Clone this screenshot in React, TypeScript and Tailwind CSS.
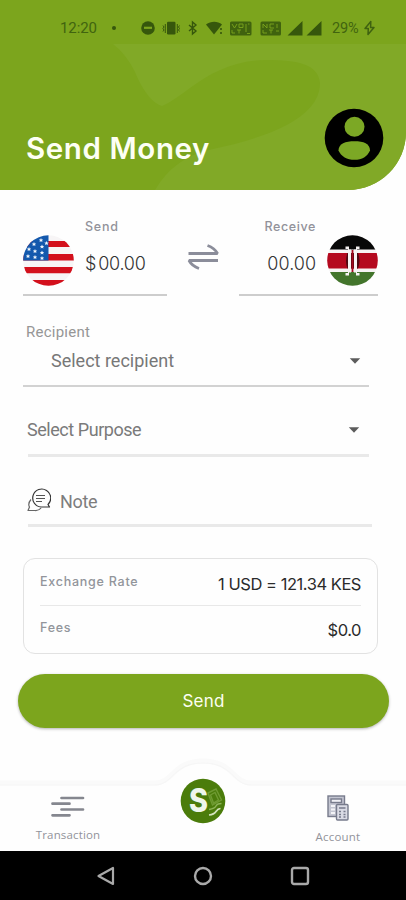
import React from 'react';

type IconProps = {
  className?: string;
};

const StatusIcons = () => (
  <svg width="238" height="20" viewBox="0 0 238 20" fill="#36570c" className="block">
    {/* Do not disturb */}
    <circle cx="10" cy="10" r="6.8" />
    <rect x="6" y="8.7" width="8" height="2.2" fill="#7ca51d" />
    {/* Vibrate */}
    <rect x="29" y="3.8" width="8.5" height="12.6" rx="1.2" />
    <path d="M27.3 6v9M39.3 6v9M25 7.500l1 1.500-1 1.500 1 1.500-1 1.500M41.500 7.500l-1 1.500 1 1.500-1 1.500 1 1.500" stroke="#36570c" strokeWidth="1" fill="none" />
    {/* Bluetooth */}
    <path d="M51 7l7 6-3.500 3V4L58 7l-7 6" stroke="#36570c" strokeWidth="1.400" fill="none" />
    {/* Wifi */}
    <path d="M68 6.500c5-3.700 11.500-3.700 16 0L76 16.500z" />
    <path d="M83 10v2M83 14v2" stroke="#36570c" strokeWidth="1.600" />
    {/* VoLTE */}
    <rect x="92" y="3.500" width="21.500" height="14" rx="1.500" opacity=".85" />
    <path d="M94 6l2.500 4 2.500-4M101 9.500h4V6h-4zM108 6v8M94 12v3h3M99 12h4M101 12v3.500M109 15.500h3M110 6h1.500" stroke="#7ca51d" strokeWidth=".9" fill="none" />
    <rect x="122.500" y="3.500" width="20.500" height="14" rx="1.500" opacity=".85" />
    <path d="M125 10V6l4 4V6M136 6h-4v4h4M125 12v3h4M131 12h4M133 12v3.500M139 6v4M138 13h3" stroke="#7ca51d" strokeWidth=".9" fill="none" />
    {/* Signal */}
    <path d="M149.500 17.500L164.500 3v14.500zM168.500 17.500L183.500 3v14.500z" />
  </svg>
);

const BatteryBolt = () => (
  <svg width="13" height="16" viewBox="0 0 13 16" fill="none" stroke="#3f6210" strokeWidth="1.500" strokeLinejoin="round">
    <path d="M7.800 1.500L2 8.500h3.300L5 14.500l6-7H7.600z" />
  </svg>
);

const UserIcon = () => (
  <svg width="60" height="60" viewBox="0 0 60 60">
    <circle cx="30" cy="30" r="29.300" fill="#000" />
    <circle cx="30.500" cy="18.800" r="10" fill="#7ca825" />
    <path d="M14.500 42.500c0-7 7-9.300 16-9.300s15.500 2.300 15.500 9.300c-2.500 6-8 9.300-15.500 9.300S17 48.500 14.500 42.500z" fill="#7ca825" />
  </svg>
);

const UsaFlag = () => (
  <svg width="51" height="51" viewBox="0 0 51 51" className="shrink-0">
    <clipPath id="usa">
      <circle cx="25.500" cy="25.500" r="25.300" />
    </clipPath>
    <g clipPath="url(#usa)">
      <rect width="51" height="51" fill="#f7f5f6" />
      <path d="M0 6h51v6H0zM0 19h51v6.500H0zM0 32h51v6.300H0zM0 45h51v6H0z" fill="#d3101c" />
      <rect width="25.500" height="25.500" fill="#1459ad" />
      <g fill="#eef4fb">
        {[
          [18, 5], [11, 9], [19, 11.500], [6, 14], [12, 16], [19, 17.500],
          [5, 21], [12, 22], [19, 23], [23.500, 8],
        ].map(([x, y]) => (
          <path key={`${x}-${y}`} d="M0-2.100L.7-.6 2.200-.5 1.100.6 1.400 2 0 1.200-1.400 2-1.100.6-2.200-.5-.7-.6z" transform={`translate(${x} ${y})`} />
        ))}
      </g>
    </g>
  </svg>
);

const KenyaFlag = () => (
  <svg width="51" height="51" viewBox="0 0 51 51" className="shrink-0">
    <clipPath id="kenya">
      <circle cx="25.500" cy="25.500" r="25.300" />
    </clipPath>
    <g clipPath="url(#kenya)">
      <rect width="51" height="51" fill="#f7f3f4" />
      <rect width="51" height="14.500" fill="#080808" />
      <rect y="18" width="51" height="15.500" fill="#b5091f" />
      <rect y="37" width="51" height="14" fill="#43752c" />
      {/* Shield */}
      <path d="M20.500 18h10.500q3 7.500 0 15.500H20.500q-3-8 0-15.500z" fill="#4f0812" />
      <path d="M18.500 11.500h3.500v3h2v23h-2v3h-3.500v-2.500h2.500V14h-2.500zM32.500 11.500H29v3h-2v23h2v3h3.500v-2.500H30V14h2.500z" fill="#f7f3f4" />
      <path d="M25.500 15v22" stroke="#a50a20" strokeWidth="1.800" />
    </g>
  </svg>
);

const SwapIcon = () => (
  <svg width="32" height="32" viewBox="0 0 32 32" fill="none" stroke="#8b8d9a" strokeWidth="2.800">
    <path d="M1.500 12.500h29q-3-5.500-10-8M31 19.500H2q3 5.500 10 8" strokeLinejoin="bevel" />
  </svg>
);

const Caret = ({ className = '' }: IconProps) => (
  <svg width="12" height="6" viewBox="0 0 12 6" className={className}>
    <path d="M.800.300h10.400L6 5.800z" fill="#5c5c5c" />
  </svg>
);

const NoteIcon = () => (
  <svg width="24" height="24" viewBox="0 0 24 24" fill="none" stroke="#343434" strokeWidth="1.200" strokeLinejoin="round">
    <path d="M21 16.500A9 9 0 1 0 14 19h8.500z" />
    <path d="M9 7.500h9M9 10.500h9M9 13.500h6" stroke="#555" />
    <path d="M4 11.500q-3.500 4-1.500 7.500l-1.500 3.500h7q4 .300 6-2.500" stroke="#666" />
  </svg>
);

const TransactionIcon = () => (
  <svg width="36" height="24" viewBox="0 0 36 24" stroke="#85878f" strokeWidth="2.700" strokeLinecap="round">
    <path d="M11.500 3h21.500M2.500 8.700h17M11.500 14.500h21.500M2.500 20.300h17" />
  </svg>
);

const AccountIcon = () => (
  <svg width="22" height="26" viewBox="0 0 22 26" fill="none" stroke="#777b8c" strokeWidth="1.400">
    <rect x="1" y="1" width="16.500" height="20.500" fill="#c3c5d1" />
    <rect x="4" y="4" width="10.500" height="3.500" fill="#f0f0f5" />
    <path d="M4 11h4M4 14.500h4M4 18h4" stroke="#f3f3f7" strokeWidth="2" />
    <rect x="9.500" y="9.500" width="11.500" height="15.500" rx="1" fill="#dadbe5" />
    <path d="M12 13h6.500M12 16.500h2M16.500 16.500h2M12 19.500h2M16.500 19.500h2M12 22h2M16.500 22h2" strokeWidth="1.300" />
  </svg>
);

const BrandLogo = () => (
  <svg width="46" height="46" viewBox="0 0 46 46" className="block">
    <circle cx="23" cy="23" r="22.300" fill="#4b7c0b" />
    <g fill="none" stroke="#6f9b32" strokeWidth="1.400">
      <path d="M28 15l8-4 5.500 11-9 5zM30.500 17l4.500-2.500 3.500 7.500-5 3z" />
      <path d="M29 31.500q6-1 7-3.500t5.500-2.500" stroke="#8db457" />
      <path d="M29 37q5-.500 7-3.500t4.500-3" stroke="#d3e3bd" strokeWidth="1.700" />
    </g>
    <text x="9" y="33.500" fill="#eef6ec" fontFamily="Inter, sans-serif" fontWeight="800" fontSize="32" textLength="19" lengthAdjust="spacingAndGlyphs">S</text>
  </svg>
);

const Header = () => (
  <header className="relative h-[190px] shrink-0 overflow-hidden rounded-br-[58px] bg-[#7ca51d]">
    <svg className="absolute inset-0" width="406" height="190" viewBox="0 0 406 190">
      <path d="M113 44H406V190H155Q174 157 213 149C265 138 320 119 320 83C318 64 298 60 266 60C235 60 210 73 190 88Q170 103 162 106C151 103 141 87 135 72Q126 54 113 44z" fill="#81a927" />
    </svg>
    <div className="relative flex h-11 items-center pt-3 pl-[60px] font-[Roboto] text-[15px] text-[#41640f]">
      <span className="w-[37px] tracking-[-0.1px]">12:20</span>
      <span className="ml-[15px] h-1 w-1 rounded-full bg-[#36570c]"></span>
      <div className="ml-[22px] w-[194px] overflow-hidden">
        <StatusIcons />
      </div>
      <span className="w-[28px] pt-0.5 text-[14.500px] tracking-[-0.2px] whitespace-nowrap">29%</span>
      <div className="ml-[3px]">
        <BatteryBolt />
      </div>
    </div>
    <div className="relative flex items-start justify-between pt-[64px] pr-[22px] pl-[26px]">
      <h1 className="mt-[22px] text-[29.500px] leading-9 font-semibold tracking-[0.6px] text-[#fdfff4]">Send Money</h1>
      <div className="h-[60px]">
        <UserIcon />
      </div>
    </div>
  </header>
);

const Transfer = () => (
  <section className="flex h-[106px] shrink-0 items-start justify-between pt-7 pr-7 pl-[23px]">
    <div className="flex h-[78px] w-[144px] items-start border-b-2 border-[#cdcdcd]">
      <div className="mt-[17px]">
        <UsaFlag />
      </div>
      <div className="ml-[11px] whitespace-nowrap">
        <p className="text-[12.500px] leading-[18px] font-medium tracking-[0.8px] text-[#92929a]">Send</p>
        <p className="mt-4 text-[18px] leading-6 font-light tracking-[-0.25px] text-[#333]">
          <span className="mr-0.5">$</span>00.00
        </p>
      </div>
    </div>
    <div className="mt-[23px]">
      <SwapIcon />
    </div>
    <div className="flex h-[78px] w-[139px] items-start justify-end border-b-2 border-[#cdcdcd]">
      <div className="mr-[11px] text-right whitespace-nowrap">
        <p className="text-[12.500px] leading-[18px] font-medium tracking-[0.6px] text-[#92929a]">Receive</p>
        <p className="mt-4 text-[18px] leading-6 font-light text-[#333]">00.00</p>
      </div>
      <div className="mt-[17px]">
        <KenyaFlag />
      </div>
    </div>
  </section>
);

const Fields = () => (
  <section className="flex shrink-0 flex-col font-[Roboto]">
    <div className="mr-[37px] ml-[23px] h-[91px] border-b-2 border-[#d2d2d2] pt-[25px]">
      <p className="ml-[3px] text-[15px] leading-[22px] tracking-[0.25px] text-[#969696]">Recipient</p>
      <div className="mt-[5px] flex h-6 items-center justify-between pr-2 pl-7">
        <span className="text-[18px] text-[#777]">Select recipient</span>
        <Caret className="mt-0.5" />
      </div>
    </div>
    <div className="mr-[37px] ml-7 flex h-[70px] items-center justify-between border-b-[3px] border-[#e9e9e9] pt-[18px] pr-[9px]">
      <span className="-ml-px text-[18px] tracking-[-0.45px] text-[#7a7a7a]">Select Purpose</span>
      <Caret />
    </div>
    <div className="mr-[34px] ml-7 flex h-[70px] items-center border-b-[3px] border-[#e9e9e9] pt-[19px]">
      <div className="-ml-px">
        <NoteIcon />
      </div>
      <span className="mt-0.5 ml-[9px] text-[18px] tracking-[-0.3px] text-[#7d7d7d]">Note</span>
    </div>
  </section>
);

const rates = [
  { label: 'Exchange Rate', value: '1 USD = 121.34 KES' },
  { label: 'Fees', value: '$0.0' },
];

const Summary = () => (
  <section className="mt-[31px] mr-7 ml-[23px] h-24 shrink-0 rounded-xl border border-[#e2e2e2] px-4">
    {rates.map((rate, i) => (
      <div key={rate.label} className={`flex h-[47px] items-center justify-between ${i === 0 ? 'border-b border-[#e8e8e8]' : 'pb-0.5'}`}>
        <span className="text-[12.500px] font-medium tracking-[0.75px] text-[#92959b]">{rate.label}</span>
        <span className="mt-1 text-[16.500px] tracking-[-0.46px] text-[#2b2b2b]">{rate.value}</span>
      </div>
    ))}
  </section>
);

const TabBar = () => (
  <nav className="relative mt-auto h-[93px] shrink-0">
    <svg className="absolute inset-0" width="406" height="93" viewBox="0 0 406 93" fill="none">
      <path d="M0 25H155C173 25 173 3 203 3S233 25 251 25H406" stroke="#fafafa" strokeWidth="5" />
      <path d="M0 27H155C173 27 173 5 203 5S233 27 251 27H406" stroke="#f6f6f6" strokeWidth="1" />
    </svg>
    <div className="relative flex h-full items-start justify-between pr-[45px] pl-9 font-['Open_Sans'] text-[11.500px] text-[#92939a]">
      <div className="flex w-16 flex-col items-center pt-[37px]">
        <TransactionIcon />
        <span className="mt-2 leading-4 tracking-[0.15px]">Transaction</span>
      </div>
      <div className="-ml-[10px] pt-5">
        <BrandLogo />
      </div>
      <div className="flex w-[46px] flex-col items-center pt-[37px]">
        <AccountIcon />
        <span className="mt-2 leading-4 tracking-[0.2px]">Account</span>
      </div>
    </div>
  </nav>
);

const SystemBar = () => (
  <div className="flex h-[49px] shrink-0 items-center justify-center gap-[77px] bg-black">
    <svg width="20" height="20" viewBox="0 0 20 20" fill="none" stroke="#a9a9a9" strokeWidth="2.200" strokeLinejoin="round">
      <path d="M17 2v16L2.500 10z" />
    </svg>
    <svg width="20" height="20" viewBox="0 0 20 20" fill="none" stroke="#a9a9a9" strokeWidth="2.400">
      <circle cx="10" cy="10" r="8" />
    </svg>
    <svg width="20" height="20" viewBox="0 0 20 20" fill="none" stroke="#a9a9a9" strokeWidth="2.400">
      <rect x="2" y="2" width="16" height="16" rx="2" />
    </svg>
  </div>
);

const App = () => {
  return (
    <div className="flex h-[900px] w-[406px] flex-col overflow-hidden bg-[#fefefe] font-[Inter,sans-serif]">
      <Header />
      <Transfer />
      <Fields />
      <Summary />
      <button className="mt-5 mr-[17px] ml-[18px] h-[54px] shrink-0 rounded-full bg-[#7ca51d] pt-0.5 text-[17px] tracking-[0.2px] text-[#fcfff3] shadow-[0_1px_3px_rgba(0,0,0,0.3)]">
        Send
      </button>
      <TabBar />
      <SystemBar />
    </div>
  );
};

export default App;
